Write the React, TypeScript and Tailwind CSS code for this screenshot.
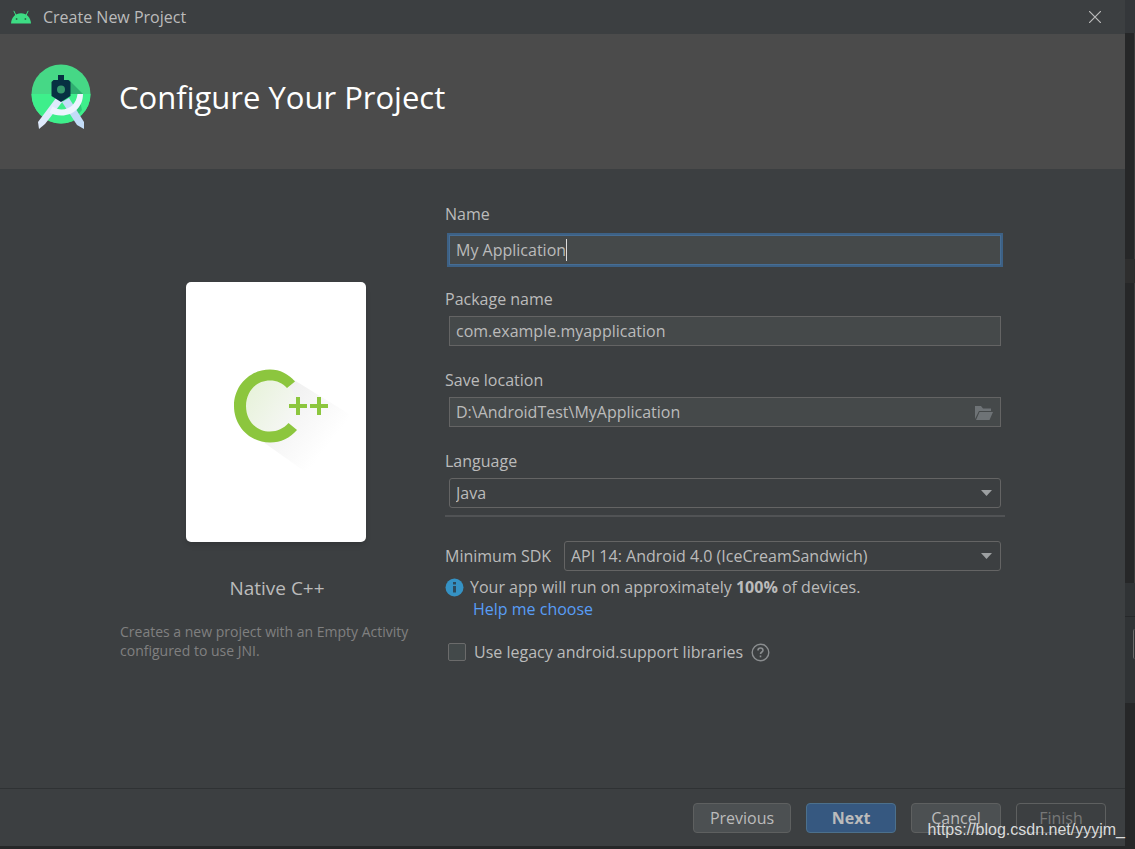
import { useState } from "react";
import type { ReactNode } from "react";

const inputClass =
  "block h-[30px] w-full border border-[#646464] bg-[#45494a] px-[6px] text-base text-[#bbbbbb] outline-none";
const selectClass =
  "block h-[30px] w-full appearance-none rounded-[3px] border border-[#646464] bg-[#3c3f41] pr-8 pl-[6px] text-base text-[#bbbbbb] outline-none";
const buttonClass = "h-[30px] rounded-[4px] border text-base";

function AndroidIcon() {
  return (
    <svg className="h-5 w-5" viewBox="0 0 20 20" fill="#3ddc84">
      <path d="M0 16.500C.4 10 4.500 6.200 10 6.200s9.600 3.800 10 10.300z" />
      <path d="M5 8.500 3 4.200M15 8.500l2-4.300" stroke="#3ddc84" strokeWidth="1" strokeLinecap="round" />
      <circle cx="5.600" cy="12" r="0.900" fill="#2c6b4a" />
      <circle cx="14.400" cy="12" r="0.900" fill="#2c6b4a" />
    </svg>
  );
}

function StudioLogo() {
  return (
    <svg className="h-[66px] w-[60px]" viewBox="0 0 60 66">
      <circle cx="30" cy="30" r="29.500" fill="#46d886" />
      <path d="M.5 30a29.500 29.500 0 0 0 59 0z" fill="#3eef8b" />
      <path d="M38 16 52 30H36z" fill="#2fae70" />
      <path d="M43 40 48 33 51 46 47 51z" fill="#2fc878" />
      <path d="M25 34 32 37 14 60 8 65 7 58z" fill="#dfeafb" />
      <path d="M31 38 38 34 53 58 53 65 46 61z" fill="#c3dcf7" />
      <path d="M46.500 30H52c0 12.500-9 21.500-21.500 21.500-5 0-9-1-12-3l3-6c3 2 6 3 9 3 9 0 15-6.500 16-15.500z" fill="#edf4fe" />
      <path d="M27 11h6v5h4.500l2 2v14L30 38l-9.500-6V18l2-2H27z" fill="#073042" />
      <circle cx="30" cy="25.500" r="4" fill="#36986c" />
    </svg>
  );
}

function CppLogo() {
  return (
    <svg className="h-[260px] w-[180px]" viewBox="0 0 180 260">
      <defs>
        <linearGradient id="cppShadow" x1="75" y1="105" x2="145" y2="160" gradientUnits="userSpaceOnUse">
          <stop offset="0" stopColor="#ebebeb" />
          <stop offset="1" stopColor="#ffffff" />
        </linearGradient>
        <linearGradient id="cppInner" x1="58" y1="105" x2="112" y2="140" gradientUnits="userSpaceOnUse">
          <stop offset="0" stopColor="#e6f2d8" />
          <stop offset="1" stopColor="#f7f7f7" />
        </linearGradient>
      </defs>
      <path d="M108 98 168 135 160 178 118 189 66 152 62 110z" fill="url(#cppShadow)" />
      <ellipse cx="84" cy="124" rx="27" ry="28" fill="url(#cppInner)" />
      <path
        d="M109 99.500C102.500 92 94 87.500 84 87.500c-20 0-36 16-36 36.500s16 36.500 36 36.500c11 0 20-4.500 27-12.500l-8.500-7c-5 5.500-11 8.500-18.500 8.500-14 0-24-11-24-25.500s10-25.500 24-25.500c7 0 12.500 2.500 17 7.500z"
        fill="#8cc63e"
      />
      <path d="M103 122h7v-7h4v7h7v4h-7v7h-4v-7h-7zM124 122h7v-7h4v7h7v4h-7v7h-4v-7h-7z" fill="#8cc63e" />
    </svg>
  );
}

function FolderIcon() {
  return (
    <svg className="h-4 w-5" viewBox="0 0 20 16" fill="#6e7376">
      <path d="M1 14V1h6l2 2.500h8V6H5z" />
      <path d="M5.500 7H19l-3.500 8H2z" />
    </svg>
  );
}

function SelectArrow() {
  return (
    <svg
      className="pointer-events-none absolute top-3 right-[9px] h-[6px] w-[11px]"
      viewBox="0 0 11 6"
      fill="#9da0a2"
    >
      <path d="M0 0h11L5.500 6z" />
    </svg>
  );
}

function Field({ id, label, children }: { id: string; label: string; children: ReactNode }) {
  return (
    <div className="mb-[22px]">
      <label htmlFor={id} className="mb-[5px] block">
        {label}
      </label>
      <div className="relative mx-1">{children}</div>
    </div>
  );
}

export default function App() {
  const [name, setName] = useState("My Application");
  const [packageName, setPackageName] = useState("com.example.myapplication");
  const [location, setLocation] = useState("D:\\AndroidTest\\MyApplication");
  const [legacy, setLegacy] = useState(false);

  return (
    <div className="relative flex min-h-screen bg-[#262728] font-['Open_Sans',sans-serif] text-base leading-6 text-[#bbbbbb]">
      <div className="mb-[3px] flex min-w-0 flex-1 flex-col bg-[#3c3f41]">
        {/* Title bar */}
        <div className="flex h-[34px] items-center bg-[#3c3f41] pr-6 pl-[11px]">
          <AndroidIcon />
          <span className="ml-3 flex-1">Create New Project</span>
          <button type="button" aria-label="Close" className="flex h-6 w-3 items-center">
            <svg className="h-3 w-3" viewBox="0 0 12 12" stroke="#bbbbbb" strokeWidth="1.200">
              <path d="M0 0l12 12M12 0 0 12" />
            </svg>
          </button>
        </div>

        {/* Header */}
        <header className="flex h-[135px] items-center bg-[#4b4b4b] pr-6 pb-[10px] pl-[31px]">
          <StudioLogo />
          <h1 className="ml-7 text-[31px] leading-10 text-white">Configure Your Project</h1>
        </header>

        <main className="flex flex-1 gap-[25px] px-[120px] pt-[33px]">
          {/* Template preview */}
          <section className="w-[300px] shrink-0 pt-20">
            <div className="ml-[66px] w-[180px] overflow-hidden rounded-[5px] bg-white shadow-md">
              <CppLogo />
            </div>
            <h2 className="mt-8 pl-[14px] text-center text-[19px] leading-7">Native C++</h2>
            <p className="mt-5 text-sm leading-[19px] text-[#808080]">
              Creates a new project with an Empty Activity configured to use JNI.
            </p>
          </section>

          <form className="min-w-0 flex-1">
            <Field id="name" label="Name">
              <div className="pt-1">
                <input
                  id="name"
                  className="block h-[30px] w-full border border-[#466d94] bg-[#45494a] px-[6px] text-base text-[#bbbbbb] caret-transparent ring-2 ring-[#3d6185] outline-none"
                  value={name}
                  onChange={(e) => setName(e.target.value)}
                />
                <span className="absolute top-2 left-[117px] h-[22px] w-px bg-[#dddddd]" />
              </div>
            </Field>
            <Field id="package" label="Package name">
              <input
                id="package"
                className={inputClass}
                value={packageName}
                onChange={(e) => setPackageName(e.target.value)}
              />
            </Field>
            <Field id="location" label="Save location">
              <input
                id="location"
                className={inputClass}
                value={location}
                onChange={(e) => setLocation(e.target.value)}
              />
              <button type="button" aria-label="Browse" className="absolute top-2 right-[7px]">
                <FolderIcon />
              </button>
            </Field>
            <div className="border-b-2 border-[#515355] pb-[7px]">
              <label htmlFor="language" className="mb-[5px] block">
                Language
              </label>
              <div className="relative mx-1">
                <select id="language" className={selectClass}>
                  <option>Java</option>
                  <option>Kotlin</option>
                </select>
                <SelectArrow />
              </div>
            </div>

            <div className="mt-6 mr-1 flex items-center">
              <label htmlFor="sdk" className="w-[119px] shrink-0">
                Minimum SDK
              </label>
              <div className="relative flex-1">
                <select id="sdk" className={selectClass}>
                  <option>API 14: Android 4.0 (IceCreamSandwich)</option>
                </select>
                <SelectArrow />
              </div>
            </div>

            <div className="mt-[5px] flex items-center gap-[6px] leading-[22px]">
              <svg className="h-[19px] w-[19px]" viewBox="0 0 19 19">
                <circle cx="9.500" cy="9.500" r="9" fill="#3592c4" />
                <path d="M8 8h3v6.500H8zM8 4h3v2.500H8z" fill="#2d4a5c" />
              </svg>
              <p>
                Your app will run on approximately <b>100%</b> of devices.
              </p>
            </div>
            <a href="#" className="ml-7 block w-fit leading-[22px] text-[#589df6]">
              Help me choose
            </a>

            <div className="mt-5 ml-[3px] flex items-center">
              <input
                id="legacy"
                type="checkbox"
                checked={legacy}
                onChange={(e) => setLegacy(e.target.checked)}
                className="h-[18px] w-[18px] appearance-none rounded-[2px] border border-[#6b6b6b] bg-[#43494a] checked:bg-[#365880]"
              />
              <label htmlFor="legacy" className="ml-2">
                Use legacy android.support libraries
              </label>
              <button type="button" aria-label="Help" className="ml-2">
                <svg className="h-[19px] w-[19px]" viewBox="0 0 19 19" fill="none" stroke="#8a8d8f">
                  <circle cx="9.500" cy="9.500" r="8.300" strokeWidth="1.400" />
                  <path d="M7 7.500c0-1.500 1-2.500 2.500-2.500S12 6 12 7.300c0 1.700-2.500 1.700-2.500 3.700M9.500 12.500v1.700" strokeWidth="1.600" />
                </svg>
              </button>
            </div>
          </form>
        </main>

        {/* Footer buttons */}
        <footer className="flex h-[58px] items-center justify-end gap-[15px] border-t border-[#2f3234] pr-[19px]">
          <button type="button" className={`${buttonClass} w-[98px] border-[#5e6060] bg-[#4c5052]`}>
            Previous
          </button>
          <button type="button" className={`${buttonClass} w-[90px] border-[#4c708c] bg-[#365880] font-bold`}>
            Next
          </button>
          <button type="button" className={`${buttonClass} w-[90px] border-[#5e6060] bg-[#4c5052]`}>
            Cancel
          </button>
          <button type="button" disabled className={`${buttonClass} w-[90px] border-[#5e6060] text-[#777777]`}>
            Finish
          </button>
        </footer>
      </div>

      {/* Strip of the window behind the dialog */}
      <div className="flex w-[10px] shrink-0 flex-col">
        <div className="h-[33px] bg-[#34373a]" />
        <div className="h-[226px] border-r border-[#3c3c3c]" />
        <div className="h-6 bg-[#2e2e2e]" />
        <div className="h-[300px] border-r border-[#3c3c3c]" />
        <div className="flex h-[120px] flex-col items-end bg-[#303335]">
          <div className="h-[34px] w-full border-b border-[#26282a]" />
          <div className="mt-3 h-[30px] w-[2px] rounded-l-[2px] border-l border-[#6b6b6b]" />
        </div>
      </div>

      <span className="pointer-events-none absolute right-[10px] bottom-[7px] font-['Liberation_Sans',sans-serif] text-base text-[#dadbdb]">
        https://blog.csdn.net/yyyjm_
      </span>
    </div>
  );
}
